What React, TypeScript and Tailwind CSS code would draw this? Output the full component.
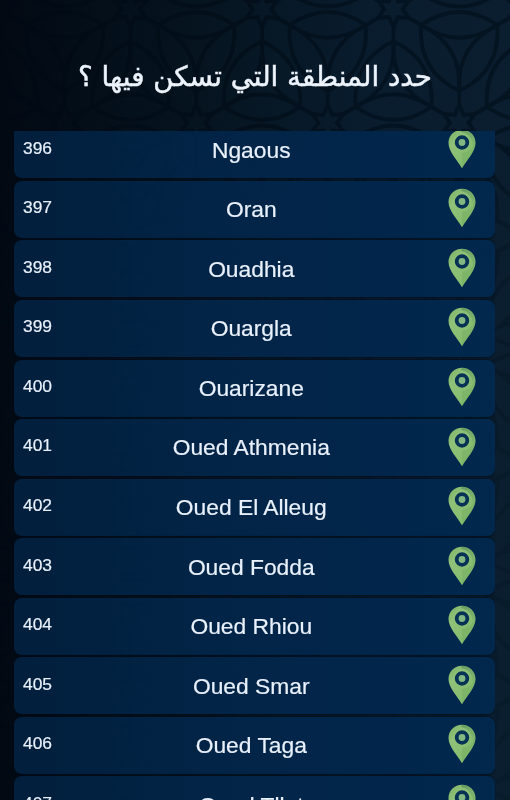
const rows = [
  [396, 'Ngaous'], [397, 'Oran'], [398, 'Ouadhia'], [399, 'Ouargla'], [400, 'Ouarizane'],
  [401, 'Oued Athmenia'], [402, 'Oued El Alleug'], [403, 'Oued Fodda'], [404, 'Oued Rhiou'],
  [405, 'Oued Smar'], [406, 'Oued Taga'], [407, 'Oued Tllat'],
] as const;

function Pin() {
  return (
    <svg viewBox="0 0 28 40" className="-mt-[2px] ml-[19px] h-10 w-7 shrink-0">
      <defs>
        <linearGradient id="pin" x1="0" y1="0" x2="0.8" y2="1">
          <stop offset="0" stopColor="#79b062" />
          <stop offset="0.3" stopColor="#8fc178" />
          <stop offset="1" stopColor="#82bb6c" />
        </linearGradient>
        <linearGradient id="shade" x1="0" y1="0" x2="1" y2="1">
          <stop offset="0" stopColor="#4b8250" stopOpacity=".6" />
          <stop offset="1" stopColor="#4b8250" stopOpacity=".05" />
        </linearGradient>
      </defs>
      <path d="M14 .7C6.500.7.500 6.300.500 14 .500 22.500 9.500 31.500 14 39.300 18.500 31.500 27.500 22.500 27.500 14 27.500 6.300 21.500.7 14 .7Z" fill="url(#pin)" />
      <path d="M14 .7C21.500.7 27.500 6.300 27.500 14Q27 17 25 20Q25 5 13 3Z" fill="url(#shade)" />
      <path d="M14 24V39.300C18.500 31.500 27 23 27.500 14Q23 23 14 24Z" fill="#6aa356" opacity=".3" />
      <circle cx="14" cy="13.500" r="5.300" fill="#83b783" stroke="#073256" strokeWidth="3.800" />
    </svg>
  );
}

const A = 131.5;
const H = 113.5;

// Three petals along an inset triangle, plus the stems that run to the stars at its corners.
function Cell({ x, y, flip }: { x: number; y: number; flip?: boolean }) {
  return (
    <g transform={`translate(${x} ${y}) rotate(${flip ? 180 : 0})`}>
      {[0, 120, 240].map((r) => (
        <g key={r} transform={`rotate(${r})`}>
          <path d="M-38 22Q0-3.500 38 22Q0 48 -38 22Z" />
          <path d="M0-44V-60M-5-69L0-58L5-69" />
        </g>
      ))}
    </g>
  );
}

function Backdrop() {
  const cells = [];
  for (let row = -1; row < 8; row++) {
    for (let col = -2; col < 5; col++) {
      const x = -1 + col * A + (row % 2 ? A / 2 : 0);
      const y = 9 + row * H;
      cells.push(<Cell key={`${row}u${col}`} x={x} y={y + 76} />);
      cells.push(<Cell key={`${row}d${col}`} x={x + A / 2} y={y + 38} flip />);
    }
  }
  return (
    <svg viewBox="0 0 510 800" className="absolute inset-0 h-full w-full [mask-image:linear-gradient(#000_130px,#0006_240px,#0003)]">
      <g fill="none" stroke="#010a14" strokeWidth="3.800" strokeLinejoin="round" opacity=".5">
        {cells}
      </g>
    </svg>
  );
}

export default function App() {
  return (
    <main className="relative h-[800px] w-[510px] overflow-hidden bg-[linear-gradient(90deg,#020913,#05131e_35%,#091d2f_75%,#0a1e2f)]">
      <Backdrop />
      <div className="relative flex h-full flex-col">
        <h1 dir="rtl" className="flex h-[131px] shrink-0 items-center justify-center whitespace-nowrap pt-[23px] font-['DejaVu_Sans',sans-serif] text-[27.700px] text-[#edf3fb] [-webkit-text-stroke:0.500px_#edf3fb]">
          حدد المنطقة التي تسكن فيها ؟
        </h1>
        <section className="mr-[15px] ml-[13.500px] flex-1 overflow-hidden">
          <ul className="-mt-[9.700px] flex flex-col gap-[2.550px]">
            {rows.map(([id, name]) => (
              <li key={id} className="grid h-[57px] shrink-0 grid-cols-[60px_1fr_66px] items-center rounded-lg bg-[linear-gradient(90deg,#02213ff0,#022549f0_40%,#022950f0)] shadow-[0_0_2px_1px_#020d1a99] font-['Liberation_Sans',Arial,sans-serif] text-[#e8f1fb]">
                <span className="pb-[4px] pl-[9.500px] text-[17.400px] [-webkit-text-stroke:0.200px_#e8f1fb]">{id}</span>
                <span className="text-center text-[22.800px] [-webkit-text-stroke:0.200px_#e8f1fb]">{name}</span>
                <Pin />
              </li>
            ))}
          </ul>
        </section>
      </div>
    </main>
  );
}
